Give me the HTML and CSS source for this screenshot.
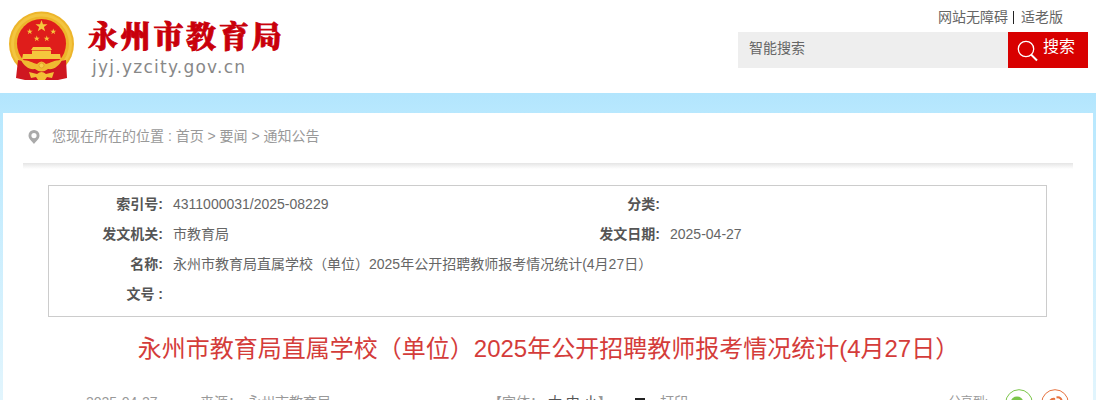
FILE: index.html
```html
<!DOCTYPE html>
<html lang="zh-CN">
    <head>
        <meta charset="utf-8">
        <title>永州市教育局</title>
        <link rel="stylesheet" href="styles.css">
    </head>
    <body>
        <div class="header">
            <div class="logo">
                <svg class="emblem" viewBox="0 0 66 70" width="66" height="70">
                    <circle cx="32.500" cy="33" r="32.500" fill="#edb52b"/>
                    <circle cx="32.500" cy="33" r="29" fill="none" stroke="#f3c540" stroke-width="3"/>
                    <circle cx="32.500" cy="32.500" r="24.500" fill="#df1d1b"/>
                    <g fill="#f5c63d">
                        <path id="star" d="M32.500 9l1.500 4.300h4.500l-3.600 2.700 1.300 4.300-3.700-2.600-3.700 2.600 1.300-4.300-3.600-2.700H31z"/>
                        <use href="#star" transform="translate(4.500 13) scale(.5)"/>
                        <use href="#star" transform="translate(28 13) scale(.5)"/>
                        <use href="#star" transform="translate(11.500 20) scale(.5)"/>
                        <use href="#star" transform="translate(21.500 20) scale(.5)"/>
                        <path d="M24 36h17l2 3H22zM23 39h19v4h9l1 5H13l1-5h9z"/>
                    </g>
                    <path d="M22 39.500h21" stroke="#df1d1b" stroke-width=".6"/>
                    <path d="M9 49l9 2 14 8 15-8 10-2 1 18-9 2H16l-9-2z" fill="#cf1720"/>
                    <path d="M12 49c9 0 11 3 16 4q4.500-5 9 0c5-1 7-4 16-4-3 6-8 10-14 9q-6.500 5-13 0c-6 1-11-3-14-9z" fill="#efba31"/>
                    <path d="M20 61l8 2q4.500-4 9 0l8-2-2 6-5-1-2 3h-7l-2-3-5 1z" fill="#f3bf36"/>
                    <circle cx="32.500" cy="54.500" r="2.500" fill="#f6cc49" stroke="#dd9a24" stroke-width=".7"/>
                </svg>
                <div class="names">
                    <div class="name">永州市教育局</div>
                    <div class="domain">jyj.yzcity.gov.cn</div>
                </div>
            </div>
            <div class="tools">
                <div class="links"><a>网站无障碍</a><i></i><a>适老版</a></div>
                <div class="search">
                    <div class="keyword">智能搜索</div>
                    <div class="btn">
                        <svg viewBox="0 0 22 22" width="22" height="22" fill="none" stroke="#fff">
                            <circle cx="9" cy="9" r="7.700" stroke-width="1.300"/>
                            <path d="M14 14.500l6 6" stroke-width="2"/>
                        </svg>
                        <span>搜索</span>
                    </div>
                </div>
            </div>
        </div>

        <div class="main">
            <div class="panel">
                <div class="position">
                    <svg viewBox="0 0 12 14" width="12" height="14">
                        <path d="M6 0a5.500 5.500 0 0 0-5.500 5.500C.5 9 4 11 6 14c2-3 5.500-5 5.500-8.500A5.500 5.500 0 0 0 6 0zm0 3a2.600 2.600 0 1 1 0 5.200A2.600 2.600 0 0 1 6 3z" fill="#aaa"/>
                    </svg>
                    <span>您现在所在的位置 : 首页 &gt; 要闻 &gt; 通知公告</span>
                </div>

                <div class="info">
                    <b>索引号:</b><span>4311000031/2025-08229</span>
                    <b>分类:</b><span></span>
                    <b>发文机关:</b><span>市教育局</span>
                    <b>发文日期:</b><span>2025-04-27</span>
                    <b>名称:</b><span class="wide">永州市教育局直属学校（单位）2025年公开招聘教师报考情况统计(4月27日）</span>
                    <b>文号 :</b><span></span>
                </div>

                <h1>永州市教育局直属学校（单位）2025年公开招聘教师报考情况统计(4月27日）</h1>

                <div class="meta">
                    <span class="date">2025-04-27</span>
                    <span class="source">来源：</span>
                    <span class="from">永州市教育局</span>
                    <span class="size">【字体： <a>大</a> <a>中</a> <a>小</a>】</span>
                    <svg class="printer" viewBox="0 0 14 14" width="14" height="14">
                        <path d="M2 0h10v4h2v7h-2v3H2v-3H0V4h2z" fill="#222"/>
                    </svg>
                    <span class="print">打印</span>
                    <span class="share">分享到:</span>
                    <svg class="wechat" viewBox="0 0 28 28" width="28" height="28">
                        <circle cx="14" cy="14" r="13.300" fill="none" stroke="#7bc549"/>
                        <ellipse cx="12" cy="12.500" rx="6" ry="5" fill="#7bc549"/>
                        <ellipse cx="18" cy="17" rx="5" ry="4" fill="#7bc549"/>
                    </svg>
                    <svg class="weibo" viewBox="0 0 28 28" width="28" height="28" fill="none" stroke="#e6723f">
                        <circle cx="14" cy="14" r="13.300"/>
                        <ellipse cx="12.500" cy="16" rx="6" ry="4.500" stroke-width="2"/>
                        <path d="M9 12q2-3 5-2M15.500 8.500q5-1 5.500 5" stroke-width="2"/>
                    </svg>
                </div>
            </div>
        </div>
    </body>
</html>
```

FILE: styles.css
```css
body {
    margin: 0;
    height: 400px;
    overflow: hidden;
    font: 14px/30px "Liberation Sans", "Noto Sans CJK SC", sans-serif;
    color: #666;
    background: #fff;
}

.header {
    display: flex;
    justify-content: space-between;
    height: 93px;
    padding: 0 8px 0 9px;
    box-sizing: border-box;
}

.logo {
    display: flex;
    padding-top: 11px;
}

.names {
    padding: 5px 0 0 13px;
}

.name {
    font: 900 30px/36px "Noto Serif CJK SC", "Noto Sans CJK SC", serif;
    letter-spacing: 2.7px;
    color: #c9000b;
    -webkit-text-stroke: 0.8px #c9000b;
}

.domain {
    padding: 4px 0 0 4px;
    font: 17px/22px "DejaVu Sans", sans-serif;
    letter-spacing: 1.25px;
    color: #888;
}

.tools {
    width: 350px;
}

.links {
    display: flex;
    align-items: center;
    justify-content: flex-end;
    height: 32px;
    padding: 2px 25px 0 0;
    box-sizing: border-box;
}

.links i {
    width: 1px;
    height: 13px;
    margin: 0 7px 0 5px;
    background: #222;
}

.search {
    display: flex;
    height: 36px;
}

.keyword {
    flex: 1;
    padding-left: 11px;
    line-height: 32px;
    background: #eee;
}

.btn {
    display: flex;
    width: 71px;
    padding-left: 9px;
    font-size: 16px;
    color: #fff;
    background: #d80000;
}

.btn svg {
    margin: 8px 4px 0 0;
}

/* page body */
.main {
    height: 307px;
    padding: 20px 3px 0;
    box-sizing: border-box;
    background: linear-gradient(#b2e5fd, #b8e8fe 20px, #e2f5fd);
}

.panel {
    height: 287px;
    padding: 0 20px;
    background: #fff;
}

.position {
    display: flex;
    height: 50px;
    padding-left: 5px;
    line-height: 46px;
    color: #999;
    position: relative;
}

.position svg {
    margin: 17px 12px 0 0;
}

.position:after {
    content: "";
    position: absolute;
    left: 0;
    right: 0;
    top: 50px;
    height: 6px;
    background: linear-gradient(#e5e5e5, #fff);
}

.info {
    display: grid;
    grid-template-columns: 114px 383px 114px 1fr;
    grid-auto-rows: 30px;
    height: 132px;
    margin: 22px 26px 0 25px;
    padding-top: 3px;
    border: 1px solid #ccc;
    box-sizing: border-box;
}

.info b {
    text-align: right;
    color: #555;
}

.info span {
    padding-left: 10px;
}

.info .wide {
    grid-column: span 3;
}

h1 {
    margin: 14px 0 0;
    padding-left: 1px;
    font-size: 24px;
    font-weight: normal;
    line-height: 36px;
    text-align: center;
    color: #d43c3a;
}

.meta {
    display: flex;
    height: 33px;
    padding: 20px 4px 0 63px;
    color: #999;
    white-space: nowrap;
}

.meta .date { width: 114px; }
.meta .source { width: 47px; }
.meta .from { width: 241px; }
.meta .size { width: 145px; }
.meta .print { margin-left: 13px; }
.meta .share { margin-left: auto; font-size: 12px; }
.meta a { color: #555; }

.meta .printer {
    margin-top: 11px;
}

.meta .wechat {
    margin: 2px 8px 0 17px;
}

.meta .weibo {
    margin-top: 2px;
}
```
